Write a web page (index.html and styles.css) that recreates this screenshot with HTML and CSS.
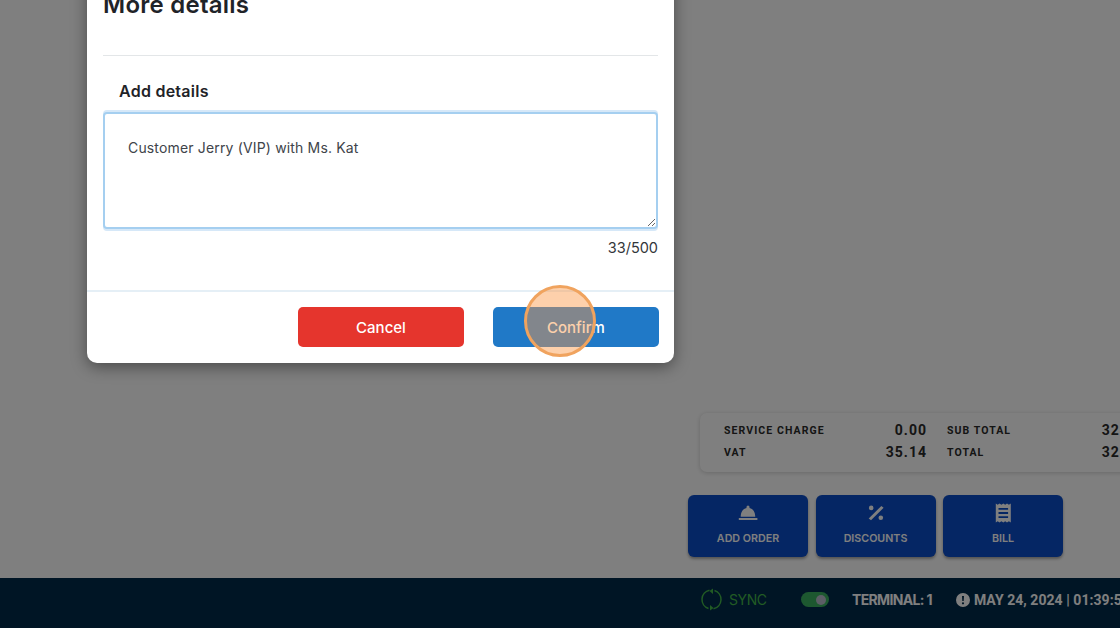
FILE: index.html
```html
<!DOCTYPE html>
<html lang="en">
<head>
<meta charset="utf-8">
<title>More details</title>
<link rel="stylesheet" href="styles.css">
</head>
<body>
<div class="app">
  <main class="main">
    <section class="side">
      <div class="summary">
        <div class="sum-col">
          <div class="sum-row"><span class="sum-label">SERVICE CHARGE</span><span class="sum-value">0.00</span></div>
          <div class="sum-row"><span class="sum-label">VAT</span><span class="sum-value">35.14</span></div>
        </div>
        <div class="sum-col sum-col-b">
          <div class="sum-row"><span class="sum-label">SUB TOTAL</span><span class="sum-value">328.00</span></div>
          <div class="sum-row"><span class="sum-label">TOTAL</span><span class="sum-value">328.00</span></div>
        </div>
      </div>
      <div class="actions">
        <button class="action">
          <svg class="action-icon" viewBox="0 0 20 20"><path d="M10 2.500a1.500 1.500 0 0 1 1.500 1.500v1c3.500.8 5.600 3.700 5.800 8.700H2.700C2.900 8.700 5 5.800 8.500 5V4A1.500 1.500 0 0 1 10 2.500zM.8 15h18.600v2H.8z"/></svg>
          <span>ADD ORDER</span>
        </button>
        <button class="action">
          <svg class="action-icon" viewBox="0 0 20 20"><circle cx="5.200" cy="4.900" r="2.300"/><circle cx="14.800" cy="14.800" r="2.300"/><path d="M15.300 3l2.300 1.800L5 17.300l-2.300-1.800z"/></svg>
          <span>DISCOUNTS</span>
        </button>
        <button class="action">
          <svg class="action-icon" viewBox="0 0 20 20"><path fill-rule="evenodd" d="M2.800.5l1.900 1.300L6.500.5l1.900 1.300L10.300.5l1.900 1.300L14 .5l1.900 1.300L17.800.5v19l-1.900-1.300-1.900 1.300-1.800-1.300-1.900 1.300-1.900-1.300-1.900 1.300-1.800-1.300-1.900 1.300zM5.500 5v1.800h9.600V5zm0 4.100v1.800h9.600V9.100zm0 4.100V15h9.600v-1.800z"/></svg>
          <span>BILL</span>
        </button>
      </div>
    </section>
  </main>
  <footer class="footer">
    <div class="sync">
      <svg class="sync-icon" viewBox="0 0 21 23"><path d="M8.500 2.200A9.500 9.500 0 0 0 7.500 20.500M12.500 20.800A9.500 9.500 0 0 0 13.500 2.500"/><path class="fill" d="M12 .5V6L8.500 3zM9 22.500V17l3.500 3z"/></svg>
      <span>SYNC</span>
    </div>
    <span class="toggle"><span class="knob"></span></span>
    <span class="terminal">TERMINAL: 1</span>
    <span class="clock">
      <svg class="clock-icon" viewBox="0 0 16 16"><path fill-rule="evenodd" d="M8 1a7 7 0 1 1 0 14A7 7 0 0 1 8 1zM7 4l.3 5h1.400L9 4zm1 6.200a1.100 1.100 0 1 0 0 2.200 1.100 1.100 0 0 0 0-2.200z"/></svg>
      MAY 24, 2024 | 01:39:58 PM
    </span>
  </footer>
</div>
<div class="scrim"></div>
<div class="modal">
  <h2 class="modal-title">More details</h2>
  <hr class="rule">
  <label class="field-label" for="details">Add details</label>
  <div class="field-wrap"><textarea class="field" id="details">Customer Jerry (VIP) with Ms. Kat</textarea></div>
  <div class="count">33/500</div>
  <div class="modal-foot">
    <button class="btn btn-cancel">Cancel</button>
    <button class="btn btn-confirm">Confirm</button>
  </div>
</div>
<div class="spot"></div>
</body>
</html>
```
FILE: styles.css
```css
* { box-sizing: border-box; }
html, body { margin: 0; height: 100%; overflow: hidden; }
body { width: 1120px; height: 628px; position: relative; font-family: "Inter", "Liberation Sans", sans-serif; background: #fff; }
button { font-family: inherit; border: 0; }

.app { height: 628px; display: flex; flex-direction: column; background: #fff; }
.main { flex: 1; display: flex; justify-content: flex-end; min-height: 0; }
.side { width: 442px; flex: none; display: flex; flex-direction: column; justify-content: flex-end; padding: 0 0 21px 10px; overflow: hidden; }

.summary { margin-left: 12px; width: 520px; height: 59px; flex: none; display: flex; background: #fff; border-radius: 7px; box-shadow: 0 1px 5px rgba(0,0,0,.18); padding: 6px 0 0 24px; }
.sum-col { width: 203px; flex: none; }
.sum-col-b { margin-left: 20px; width: 205px; }
.sum-row { display: flex; justify-content: space-between; align-items: center; height: 22px; }
.sum-label { font: 700 10.500px "Roboto", sans-serif; letter-spacing: 1.080px; color: #2a2a2a; }
.sum-value { font: 700 14px "Roboto", sans-serif; letter-spacing: 1px; color: #2a2a2a; }

.actions { display: flex; gap: 7.500px; margin-top: 23px; }
.action { width: 120px; height: 62px; background: #0a4cc8; color: #fff; border-radius: 6px; box-shadow: 0 2px 3px rgba(0,0,0,.35); display: flex; flex-direction: column; align-items: center; padding: 8px 0 0; font-size: 10.700px; font-weight: 600; }
.action-icon { width: 20px; height: 20px; fill: #fff; margin-bottom: 9px; }

.footer { height: 50px; flex: none; display: flex; align-items: center; background: #012a4a; padding: 0 0 7px 701px; white-space: nowrap; color: #fff; font-weight: 700; }
.sync { flex: none; display: flex; align-items: center; gap: 7px; color: #43b649; font-weight: 400; font-size: 14px; letter-spacing: -.4px; width: 100px; }
.sync-icon { width: 21px; height: 23px; flex: none; fill: none; stroke: #43b649; stroke-width: 1.500; }
.sync-icon .fill { fill: #43b649; stroke: none; }
.toggle { flex: none; width: 28px; height: 15px; border-radius: 8px; background: #3ab060; display: flex; align-items: center; justify-content: flex-end; padding-right: 3px; margin-right: 23px; }
.knob { width: 10px; height: 10px; border-radius: 50%; background: #b8bccc; }
.terminal { flex: none; font-size: 14px; letter-spacing: -.65px; margin-right: 23px; }
.clock { flex: none; display: flex; align-items: center; gap: 3px; font: 700 14px "Roboto", sans-serif; letter-spacing: .05px; }
.clock-icon { width: 16px; height: 16px; fill: #fff; }

.scrim { position: absolute; inset: 0; background: rgba(0,0,0,.5); }

.modal { position: absolute; left: 87px; top: -40px; width: 587px; height: 403px; background: #fff; border-radius: 10px; box-shadow: 0 4px 16px rgba(0,0,0,.42); padding: 29px 15px 0 16px; display: flex; flex-direction: column; }
.modal-title { margin: 0; font-size: 24px; line-height: 32px; font-weight: 600; color: #1f2328; letter-spacing: .25px; }
.rule { margin: 34px 1px 0 0; border: 0; height: 1px; background: #e3e6e8; flex: none; }
.field-label { margin: 25px 0 0 16px; font-size: 16px; line-height: 20px; font-weight: 600; color: #1f2328; letter-spacing: .25px; }
.field-wrap { margin: 9px 1px 0 0; padding: 2px 0; border-radius: 4px; background: #d6e8f8; height: 121px; flex: none; }
.field { display: block; width: 100%; height: 117px; padding: 24px 23px; border: 2px solid #a5cff0; border-radius: 4px; outline: 0; font: 400 14px/20px "Inter", sans-serif; color: #40444a; background: #fff; letter-spacing: .16px; }
.count { margin: 7px 1px 0 0; text-align: right; font-size: 14.500px; line-height: 20px; color: #33363a; }
.modal-foot { margin: 32px -15px 0 -16px; border-top: 2px solid #e5eff6; padding: 15px 15px 0 16px; display: flex; justify-content: flex-end; gap: 29px; }
.btn { width: 166px; height: 40px; border-radius: 5px; color: #fff; font-size: 15px; font-weight: 500; padding: 0; }
.btn-cancel { background: #e5352d; }
.btn-confirm { background: #2079c7; }

.spot { position: absolute; left: 524px; top: 285px; width: 72px; height: 72px; border-radius: 50%; border: 3px solid #f0a35e; background: rgba(251,151,69,.45); }
```
